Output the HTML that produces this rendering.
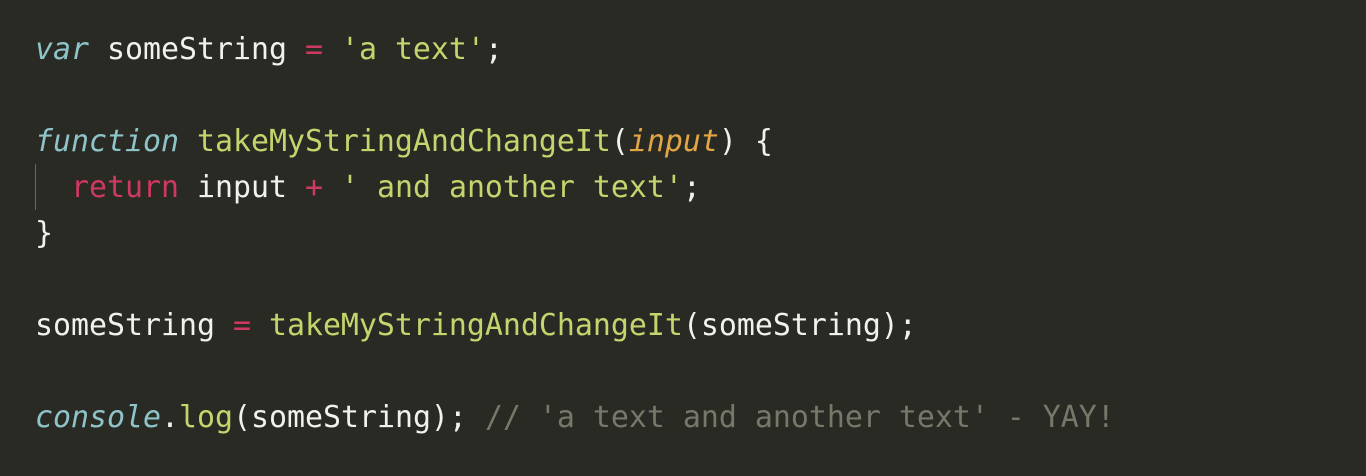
<!DOCTYPE html>
<html><head><style>
html,body{margin:0;padding:0;background:#2a2a24;width:1366px;height:476px;overflow:hidden}
pre{margin:0;position:absolute;left:35px;top:27px;font-family:"DejaVu Sans Mono","Liberation Mono",monospace;font-size:29.9px;line-height:46px;color:#f2f2ec}
.k{color:#8ec4c9;font-style:italic}.f{color:#c5d46c}.s{color:#c5d46c}.p{color:#cf3863}.a{color:#e3a645;font-style:italic}.c{color:#77776a}
.g{position:absolute;left:35px;top:164px;width:1px;height:46px;background:#6b6a4a}
</style></head><body>
<div class="g"></div>
<pre><span class="k">var</span> someString <span class="p">=</span> <span class="s">'a text'</span>;

<span class="k">function</span> <span class="f">takeMyStringAndChangeIt</span>(<span class="a">input</span>) {
  <span class="p">return</span> input <span class="p">+</span> <span class="s">' and another text'</span>;
}

someString <span class="p">=</span> <span class="f">takeMyStringAndChangeIt</span>(someString);

<span class="k">console</span>.<span class="f">log</span>(someString); <span class="c">// 'a text and another text' - YAY!</span></pre>
</body></html>
